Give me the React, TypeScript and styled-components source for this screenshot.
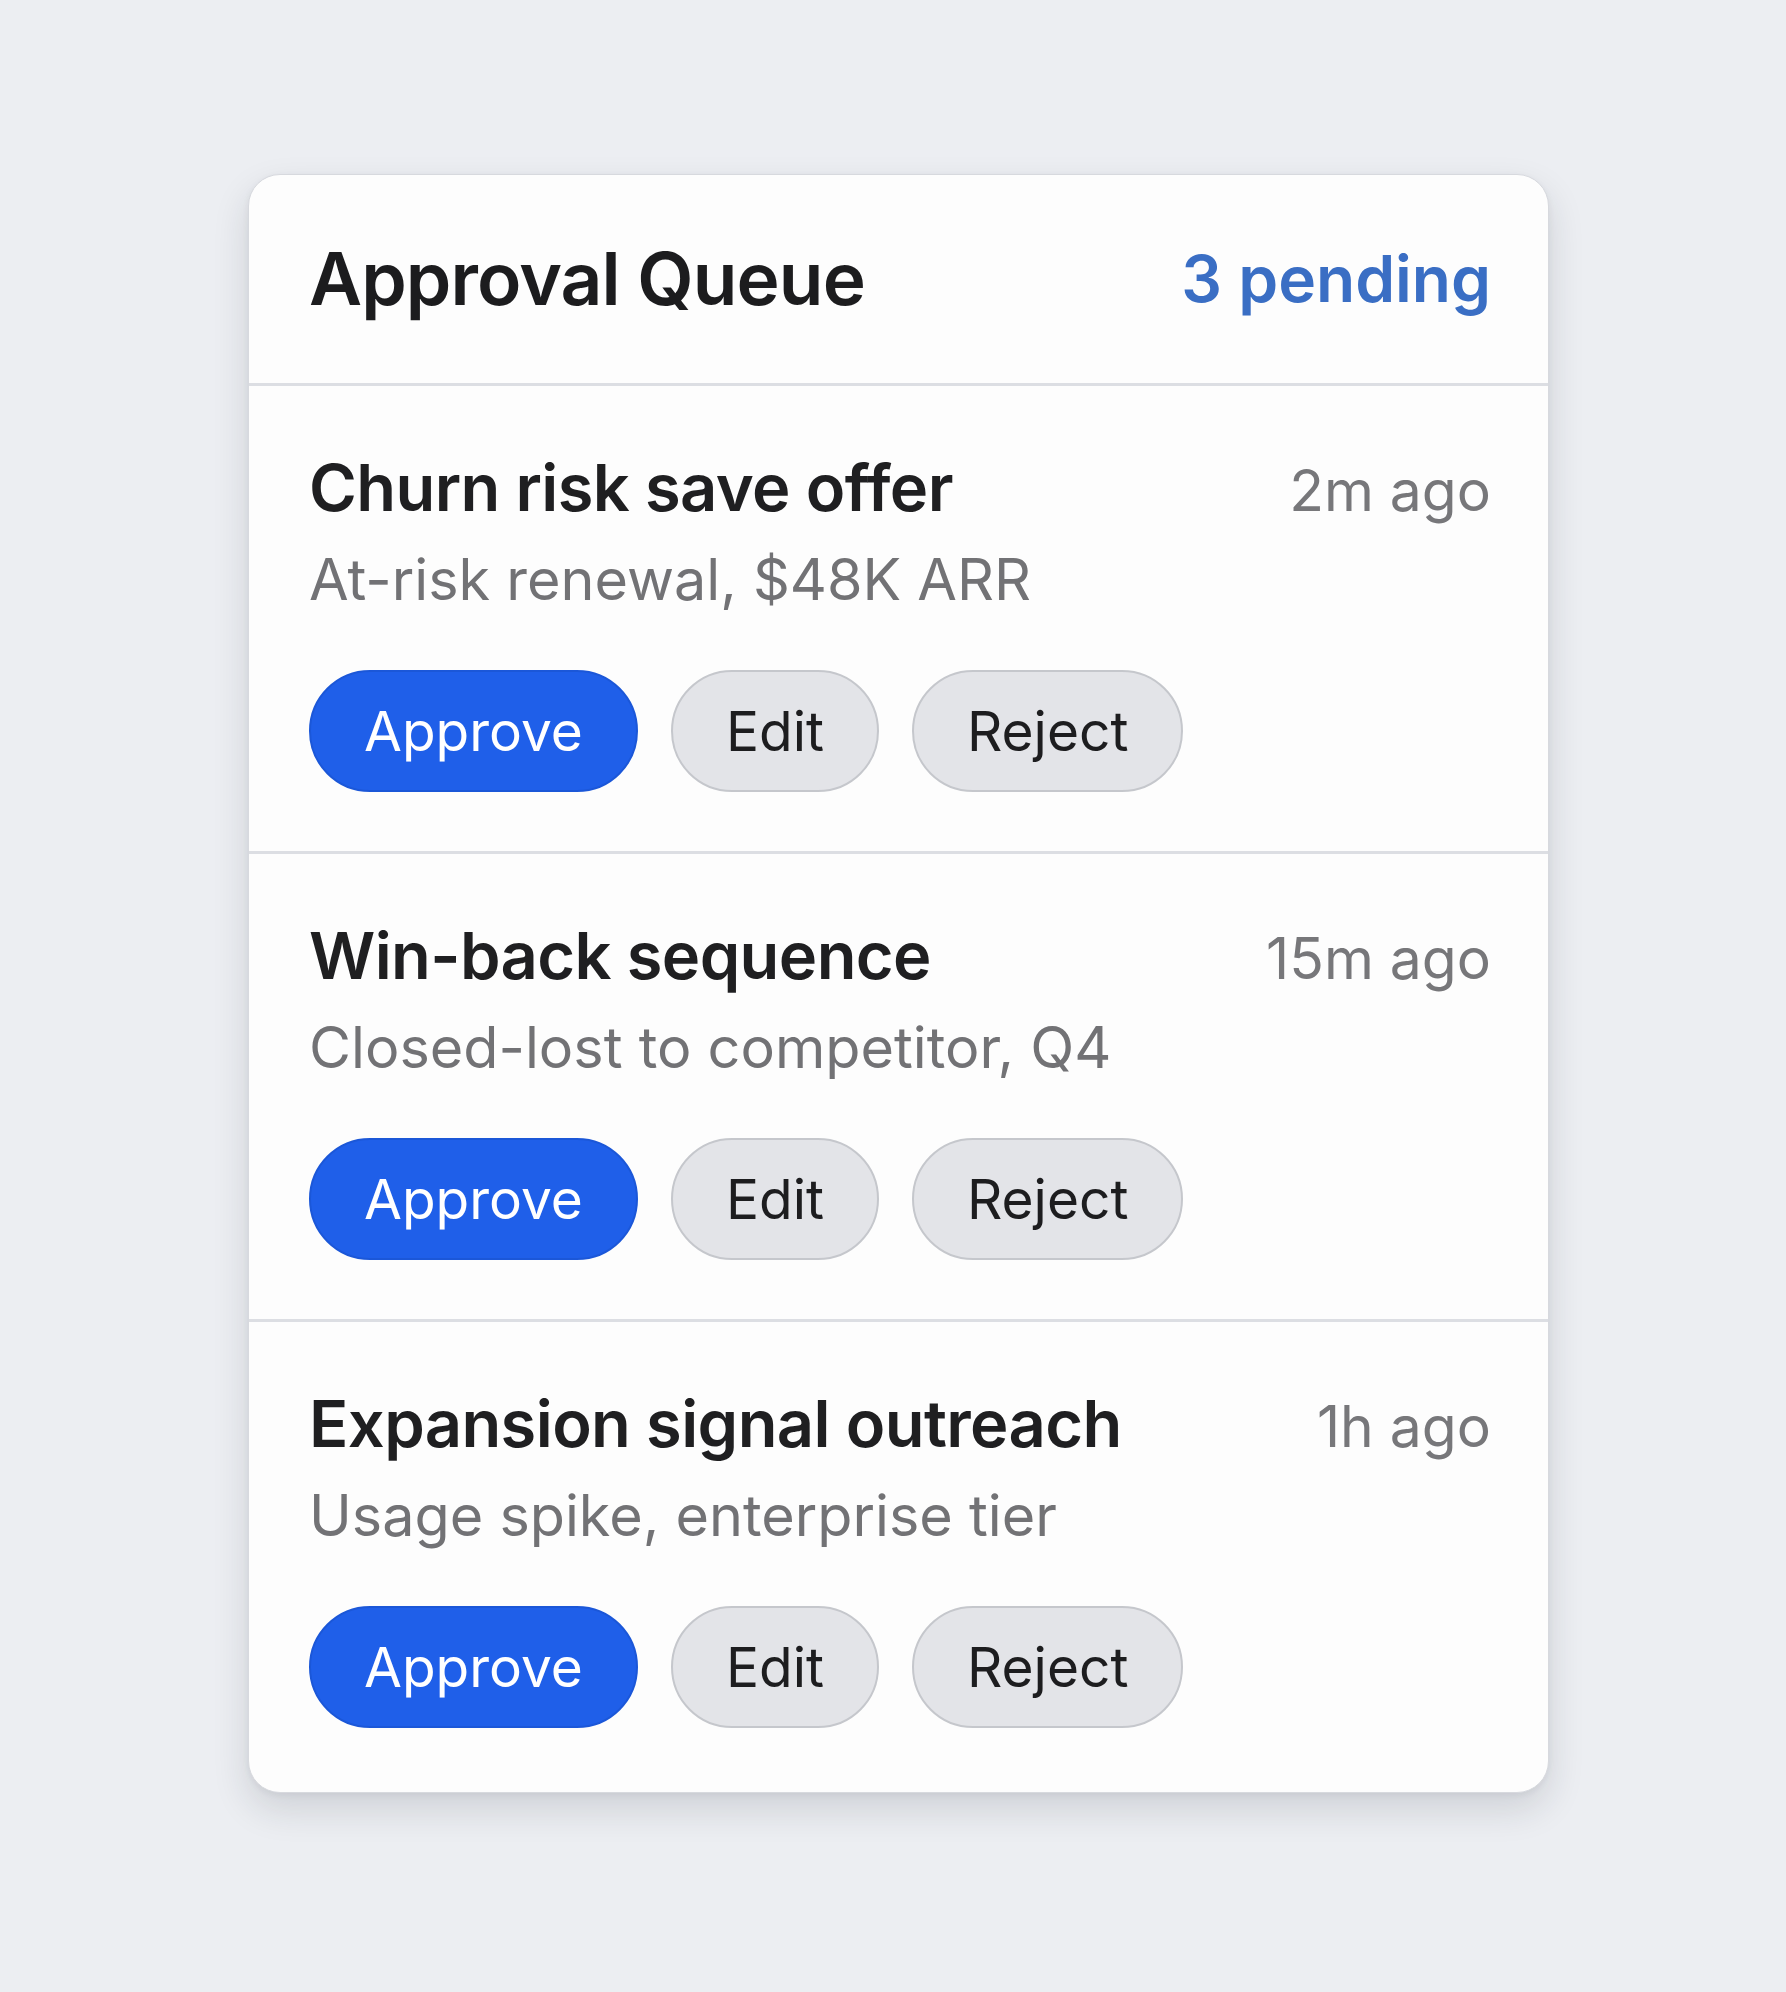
import React from "react";
import styled, { createGlobalStyle } from "styled-components";

const Global = createGlobalStyle`
  html, body {
    margin: 0;
    padding: 0;
    background: #eceef2;
    font-family: Inter, "Noto Sans", "Liberation Sans", sans-serif;
    -webkit-font-smoothing: antialiased;
  }
`;

const Page = styled.div`
  min-height: 1992px;
  padding: 174px 0 0 248px;
  box-sizing: border-box;
`;

const Card = styled.section`
  width: 1301px;
  box-sizing: border-box;
  background: #fdfdfd;
  border: 1px solid #d7d9de;
  border-radius: 32px;
  box-shadow: 0 16px 36px rgba(30, 35, 50, 0.14), 0 2px 6px rgba(30, 35, 50, 0.06);
  overflow: hidden;
`;

const Header = styled.header`
  display: flex;
  align-items: center;
  justify-content: space-between;
  height: 211px;
  padding: 0 57px 0 60px;
  box-sizing: border-box;
  border-bottom: 3px solid #dcdee3;
`;

const Title = styled.h1`
  margin: 0;
  font-size: 73px;
  line-height: 1.2;
  font-weight: 600;
  color: #1c1c1e;
  letter-spacing: -0.9px;
`;

const Pending = styled.span`
  font-size: 64px;
  line-height: 1.2;
  font-weight: 600;
  color: #3a6ec4;
`;

const Item = styled.article<{ $last?: boolean }>`
  padding: 63px 57px ${(p) => (p.$last ? "64px" : "59px")} 60px;
  border-bottom: ${(p) => (p.$last ? "none" : "3px solid #dcdee3")};
`;

const TopLine = styled.div`
  display: flex;
  align-items: baseline;
  justify-content: space-between;
`;

const ItemTitle = styled.h2`
  margin: 0;
  font-size: 65px;
  line-height: 1.2;
  font-weight: 600;
  color: #1f1f21;
  letter-spacing: -0.6px;
`;

const Time = styled.span`
  font-size: 57px;
  line-height: 1.2;
  font-weight: 400;
  color: #77777a;
`;

const Sub = styled.p`
  margin: 18px 0 0;
  font-size: 57.5px;
  line-height: 1.2;
  font-weight: 400;
  color: #727275;
`;

const Actions = styled.div`
  display: flex;
  gap: 33px;
  margin-top: 56px;
`;

const Button = styled.button<{ $primary?: boolean }>`
  height: 122px;
  padding: 0 53px;
  border-radius: 61px;
  font-family: inherit;
  font-size: 55px;
  font-weight: 400;
  box-sizing: border-box;
  cursor: pointer;
  background: ${(p) => (p.$primary ? "#1f5fe9" : "#e3e4e8")};
  color: ${(p) => (p.$primary ? "#ffffff" : "#1d1d1f")};
  border: 2px solid ${(p) => (p.$primary ? "#1b57d8" : "#c5c7cc")};
`;

const items = [
  { title: "Churn risk save offer", time: "2m ago", sub: "At-risk renewal, $48K ARR" },
  { title: "Win-back sequence", time: "15m ago", sub: "Closed-lost to competitor, Q4" },
  { title: "Expansion signal outreach", time: "1h ago", sub: "Usage spike, enterprise tier" },
];

export default function App() {
  return (
    <>
      <Global />
      <Page>
        <Card>
          <Header>
            <Title>Approval Queue</Title>
            <Pending>3 pending</Pending>
          </Header>
          {items.map((it, i) => (
            <Item key={it.title} $last={i === items.length - 1}>
              <TopLine>
                <ItemTitle>{it.title}</ItemTitle>
                <Time>{it.time}</Time>
              </TopLine>
              <Sub>{it.sub}</Sub>
              <Actions>
                <Button $primary>Approve</Button>
                <Button>Edit</Button>
                <Button>Reject</Button>
              </Actions>
            </Item>
          ))}
        </Card>
      </Page>
    </>
  );
}
